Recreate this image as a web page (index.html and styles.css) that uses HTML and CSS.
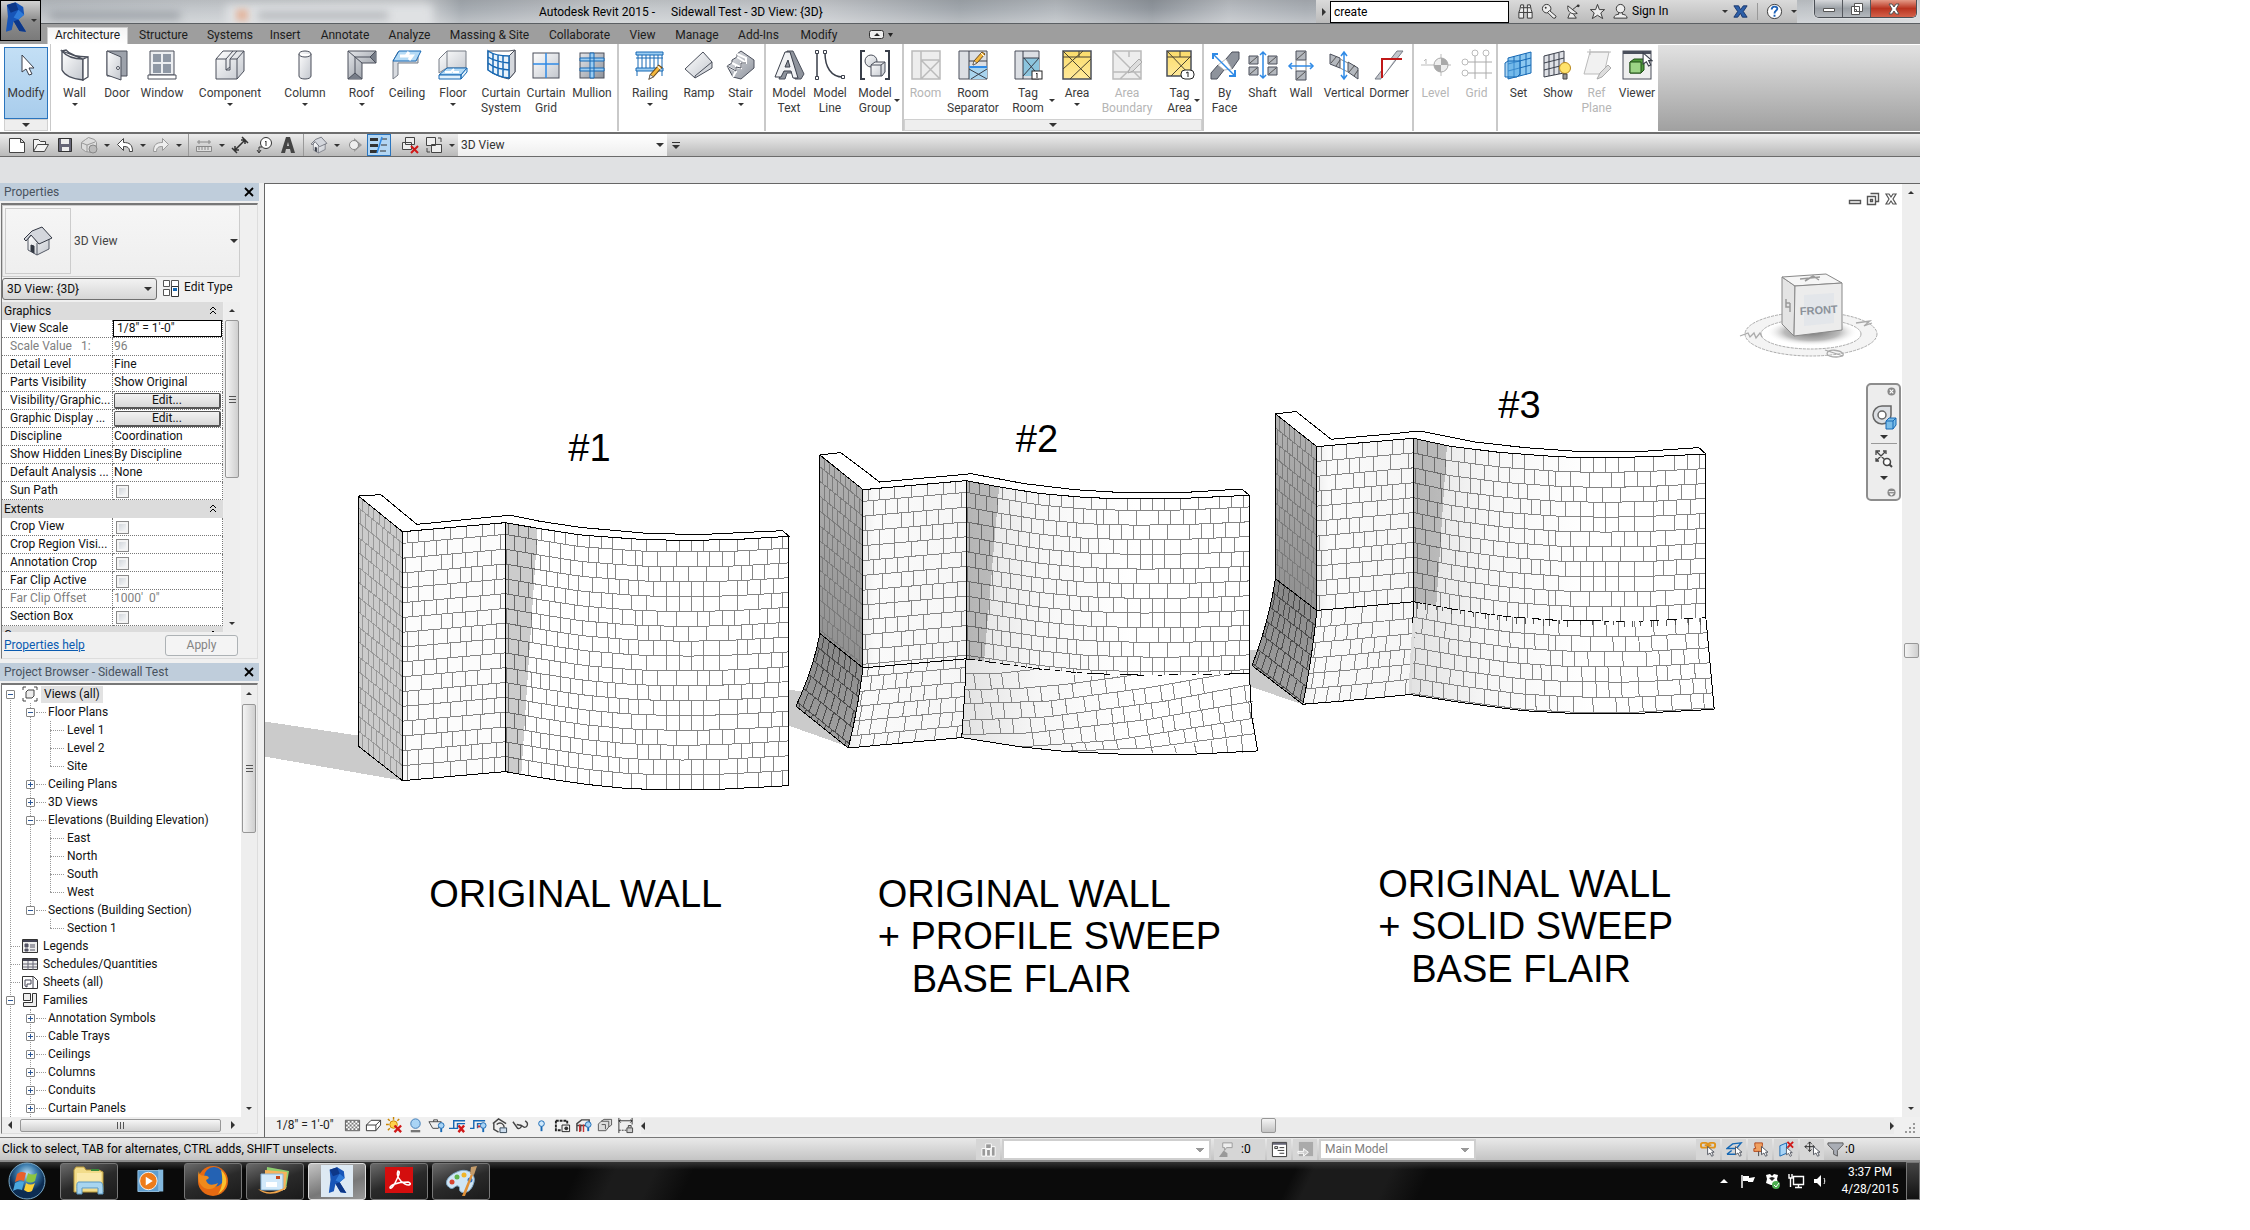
FILE: index.html
```html
<!DOCTYPE html>
<html lang="en">
<head>
<meta charset="utf-8">
<title>Autodesk Revit 2015 - Sidewall Test - 3D View: {3D}</title>
<link rel="stylesheet" href="styles.css">
</head>
<body>
<svg class="defs" aria-hidden="true">
  <defs>
    <linearGradient id="g" x1="0" y1="0" x2="1" y2="1"><stop offset="0" stop-color="#fff"/><stop offset="1" stop-color="#c3c7ce"/></linearGradient>
    <linearGradient id="gd" x1="0" y1="0" x2="1" y2="1"><stop offset="0" stop-color="#e4e6ea"/><stop offset="1" stop-color="#8d929b"/></linearGradient>
    <linearGradient id="gy" x1="0" y1="0" x2="0" y2="1"><stop offset="0" stop-color="#fbdc6a"/><stop offset="1" stop-color="#ffe99a"/></linearGradient>
    <linearGradient id="side" x1="0" y1="0" x2="0" y2="1"><stop offset="0" stop-color="#b2b2b2"/><stop offset="1" stop-color="#8e8e8e"/></linearGradient>
    <linearGradient id="skirt" x1="0" y1="0" x2="0" y2="1"><stop offset="0" stop-color="#868686"/><stop offset="1" stop-color="#a2a2a2"/></linearGradient>
    <linearGradient id="front" x1="0" y1="0" x2="1" y2="0"><stop offset="0" stop-color="#eeeeee"/><stop offset=".12" stop-color="#fafafa"/><stop offset="1" stop-color="#f6f6f6"/></linearGradient>
    <linearGradient id="bend" x1="0" y1="0" x2="1" y2="0"><stop offset="0" stop-color="#e2e2e2"/><stop offset=".25" stop-color="#f6f6f6"/><stop offset=".6" stop-color="#fff"/><stop offset="1" stop-color="#fff"/></linearGradient>
    <radialGradient id="halo"><stop offset="0" stop-color="#777"/><stop offset=".6" stop-color="#bbb"/><stop offset="1" stop-color="#fff" stop-opacity="0"/></radialGradient>
    <radialGradient id="orb" cx=".5" cy=".3"><stop offset="0" stop-color="#b9dff2"/><stop offset=".5" stop-color="#3f7fb0"/><stop offset="1" stop-color="#0c2c52"/></radialGradient>
    <symbol id="pencil" viewBox="0 0 16 16"><path d="M2 15l1-4 8-9 3 2-8 9z" fill="#f5b83d" stroke="#6b4a1c"/><path d="M10 3l3 3" stroke="#fff"/><path d="M2 15l1-4 3 2z" fill="#fff" stroke="#555" stroke-width=".7"/></symbol>
    <symbol id="cursor" viewBox="0 0 10 14"><path d="M1 1v10l3-2 2 4 2-1-2-4h3z" fill="#fff" stroke="#3a3f4a"/></symbol>
    <symbol id="rlogo" viewBox="0 0 24 32"><path d="M2 3l9-3 8 5 1 8-6 5 8 13-7-1-6-10-2 9-6 2 2-16z" fill="#1755b8"/><path d="M2 3l9-3 3 8-8 3zM9 20l5-2 8 13-7-1z" fill="#0d3788"/><path d="M14 8l6 5-6 5-5-2z" fill="#2f7bd9"/></symbol>
    <symbol id="house" viewBox="0 0 32 32"><path d="M6 14v11l9 5 12-6V13L15 17l-5-8z" fill="url(#g)" stroke="#555a66"/><path d="M15 18v12" stroke="#555a66"/><path d="M2 14L10 6l10-4 10 11-13 6-8-9-5 6z" fill="#d4d7dd" stroke="#333843"/><path d="M9 20l3 1v7l-3-2z" fill="#333843" stroke="#333843"/></symbol>
  </defs>
</svg>

<div class="app">
  <header class="titlebar">
    <span class="ghost ghost-a"></span><span class="ghost ghost-tab"></span><span class="ghost ghost-b"></span><span class="ghost ghost-dot"></span>
    <h1 class="title"><span>Autodesk Revit 2015 -</span><span>Sidewall Test - 3D View: {3D}</span></h1>
    <div class="infocenter">
      <span class="caret right"></span>
      <input class="search" aria-label="Search" value="create">
      <button class="ib" aria-label="Find"><svg viewBox="0 0 18 18"><path d="M3 7l1-5h3v3h4V2h3l1 5 1 3v6h-5v-6H7v6H2v-6z" fill="#eee" stroke="#333"/><path d="M2 10h5M11 10h5M7 5v5M11 5v5M4 5h3M11 5h3" stroke="#333"/></svg></button>
      <button class="ib" aria-label="Subscription"><svg viewBox="0 0 18 18"><circle cx="6" cy="6" r="4.500" fill="#eee" stroke="#333"/><circle cx="5" cy="5" r="1" fill="#333"/><path d="M9 8l7 6-1 2h-2l-6-6z" fill="#eee" stroke="#333"/></svg></button>
      <button class="ib" aria-label="Communication"><svg viewBox="0 0 18 18"><path d="M3 3c-1 6 4 10 10 8zM8 7l5-4M5 11l-2 5h9l-3-4" fill="#eee" stroke="#333"/><circle cx="14" cy="3" r="1.500" fill="#333"/></svg></button>
      <button class="ib" aria-label="Favorites"><svg viewBox="0 0 18 18"><path d="M9 1.500l2 5.500h5.500l-4 3.500 2 6L9 13l-5.500 3.500 2-6-4-3.500H7z" fill="#eee" stroke="#333"/></svg></button>
      <button class="sign"><svg viewBox="0 0 18 18"><path d="M2 16c0-3 3-4 5-4v-2h4v2c2 0 5 1 5 4z" fill="#eee" stroke="#333"/><circle cx="9" cy="6" r="4.500" fill="#eee" stroke="#333"/></svg>Sign In<span class="caret"></span></button>
      <button class="ib" aria-label="Exchange"><svg viewBox="0 0 18 18"><path d="M2 3h5l2 4 3-4h4l-4 6 4 6h-5l-2-4-3 4H2l4-6z" fill="#2c5fa8" stroke="#18356b"/></svg></button>
      <button class="ib help" aria-label="Help"><svg viewBox="0 0 18 18"><circle cx="9" cy="9" r="7.500" fill="#fff" stroke="#333"/><path d="M6 7c0-4 6-4 6-1 0 2-3 2-3 5M9 12.500v2" fill="none" stroke="#1e62b8" stroke-width="2"/></svg></button>
      <span class="caret"></span>
    </div>
    <div class="winctl">
      <button aria-label="Minimize"><svg viewBox="0 0 14 12"><path d="M1.500 5.500h11v3h-11z" fill="#fff" stroke="#555"/></svg></button>
      <button aria-label="Restore"><svg viewBox="0 0 14 12"><path d="M4.500.5h8v8h-8zM1.500 3.500h8v8h-8z" fill="#fff" stroke="#555"/><path d="M4.500 6.500h2v2h-2z" fill="#fff" stroke="#555"/></svg></button>
      <button class="x" aria-label="Close"><svg viewBox="0 0 14 12"><path d="M2 1h3l2 3 2-3h3L9 6l3 5H9L7 8l-2 3H2l3-5z" fill="#fff" stroke="#555"/></svg></button>
    </div>
  </header>
  <button class="appmenu" aria-label="Application menu"><svg viewBox="0 0 24 32"><use href="#rlogo"/></svg><span class="caret"></span></button>

  <nav class="tabs">
    <button class="on">Architecture</button><button>Structure</button><button>Systems</button><button>Insert</button><button>Annotate</button><button>Analyze</button><button>Massing &amp; Site</button><button>Collaborate</button><button>View</button><button>Manage</button><button>Add-Ins</button><button>Modify</button>
    <button class="mini" aria-label="Minimize ribbon"><svg viewBox="0 0 24 10"><rect x=".5" y=".5" width="14" height="8" rx="2" fill="#eee" stroke="#333"/><path d="M5 6l3-3 3 3zM19 3h5l-2.500 4z" fill="#222"/></svg></button>
  </nav>

  <div class="ribbon">
    <section class="panel p-modify">
      <button class="rb sel"><svg viewBox="0 0 32 32"><path d="M12 6v17l4-3 3 6 3-1-3-6h5z" fill="#fff" stroke="#3a3f4a"/></svg>Modify</button>
      <button class="more" aria-label="Select options"><span class="caret big"></span></button>
    </section>
    <section class="panel p-build">
      <button class="rb"><svg viewBox="0 0 32 32"><path d="M3 2c5 6 13 8 21 8v21C14 30 6 27 3 21z" fill="url(#g)" stroke="#4a4f5b" stroke-width="1.300"/><path d="M3 2l4-1c4 5 13 7 22 7l-5 2zM24 10l5-2v20l-5 3z" fill="#fff" stroke="#4a4f5b" stroke-width="1.300"/></svg>Wall<span class="caret"></span></button>
      <button class="rb"><svg viewBox="0 0 32 32"><path d="M6 2h20v25H6z" fill="#9da2ab" stroke="#4a4f5b"/><path d="M6 2l14 6v23L6 26z" fill="url(#g)" stroke="#4a4f5b"/><circle cx="17" cy="19" r="1.500" fill="#fff" stroke="#4a4f5b"/></svg>Door</button>
      <button class="rb"><svg viewBox="0 0 32 32"><path d="M4 2h24v24H4z" fill="#eceef1" stroke="#4a4f5b"/><path d="M7 5h18v19H7z" fill="#8f98a5"/><path d="M16 5v19M7 14h18" stroke="#eceef1" stroke-width="2"/><path d="M2 26h28v4H2z" fill="#fff" stroke="#4a4f5b"/></svg>Window</button>
      <button class="rb"><svg viewBox="0 0 32 32"><path d="M2 10l7-8h21v20l-7 8H2z" fill="url(#g)" stroke="#4a4f5b"/><path d="M2 10h10v11h4V10h7v20M12 10l7-8M16 10l7-8M23 10l7-8M12 21l4-3" fill="none" stroke="#4a4f5b"/></svg>Component<span class="caret"></span></button>
      <button class="rb"><svg viewBox="0 0 32 32"><path d="M10 5c0-4 12-4 12 0v22c0 4-12 4-12 0z" fill="url(#g)" stroke="#4a4f5b"/><path d="M10 5c0 4 12 4 12 0" fill="#fff" stroke="#4a4f5b"/></svg>Column<span class="caret"></span></button>
      <button class="rb"><svg viewBox="0 0 32 32"><path d="M2 2h28v12H16v16H2z" fill="url(#gd)" stroke="#4a4f5b"/><path d="M30 2v12l-6-6zM2 30h14l-7-6z" fill="#777d88"/><path d="M2 2l7 6h15M9 8v16M9 8l7 6M30 2l-6 6 6 6M2 30l7-6 7 6" fill="none" stroke="#4a4f5b"/></svg>Roof<span class="caret"></span></button>
      <button class="rb"><svg viewBox="0 0 32 32"><path d="M2 12v18l5-4V14h20V3H7z" fill="#d8dbe0" stroke="#777c86"/><path d="M2 12l6-10h22l-5 10z" fill="#b4daf5" stroke="#1668b4"/><path d="M9 7h6l3-4M15 7h6l-3 4" fill="none" stroke="#fff" stroke-width="3"/></svg>Ceiling</button>
      <button class="rb"><svg viewBox="0 0 32 32"><path d="M2 24V10l8-8h19v18H8z" fill="url(#g)" stroke="#777c86"/><path d="M10 2v17h19" fill="none" stroke="#777c86"/><path d="M2 26l8-7h20l-6 7z" fill="#b4daf5" stroke="#1668b4"/><path d="M2 26h22v4H2zM24 26l6-7v4l-6 7z" fill="#e2f1fb" stroke="#1668b4"/><path d="M8 23h6l3-3M16 23h6" fill="none" stroke="#fff" stroke-width="2"/></svg>Floor<span class="caret"></span></button>
      <button class="rb two"><svg viewBox="0 0 32 32"><path d="M3 2h21l6-1v22l-6 7C14 28 7 24 3 21z" fill="#fff" stroke="#4a4f5b"/><path d="M24 7l6-6v22l-6 7z" fill="#d5d8dd" stroke="#4a4f5b"/><path d="M3 2c6 4 12 5 21 5v22C14 28 7 24 3 21zM3 8c6 4 12 5 21 6M3 14c6 5 12 6 21 7M8 5v20M13 6v21M18 7v21" fill="#e9f3fb" stroke="#1668b4" stroke-width="1.500"/></svg>Curtain<br>System</button>
      <button class="rb two"><svg viewBox="0 0 32 32"><rect x="3" y="4" width="26" height="25" fill="url(#g)" stroke="#4a4f5b"/><path d="M16 4v25M3 15h26" stroke="#2f8ae6" stroke-width="1.500"/></svg>Curtain<br>Grid</button>
      <button class="rb"><svg viewBox="0 0 32 32"><rect x="4" y="4" width="24" height="25" fill="url(#gd)" stroke="#4a4f5b"/><path d="M4 9h24v3H4zM4 19h24v3H4zM14 4h4v25h-4z" fill="#9ccdf2" stroke="#1668b4"/></svg>Mullion</button>
    </section>
    <section class="panel p-circ">
      <button class="rb"><svg viewBox="0 0 32 32"><path d="M2 3h27v3H2zM2 19h27v3H2z" fill="#9ccdf2" stroke="#1668b4"/><path d="M4 6v13M8 6v13M12 6v13M16 6v13M20 6v13M24 6v13M28 6v13" stroke="#1668b4"/><path d="M2 9h27M3 22v5M28 22v5" stroke="#1668b4"/><use href="#pencil" x="13" y="14" width="17" height="17"/></svg>Railing<span class="caret"></span></button>
      <button class="rb"><svg viewBox="0 0 32 32"><path d="M2 20L20 3l9 10v6L12 29z" fill="url(#g)" stroke="#4a4f5b"/><path d="M12 29v-2l17-14" fill="none" stroke="#4a4f5b"/></svg>Ramp</button>
      <button class="rb"><svg viewBox="0 0 32 32"><path d="M2 17l5-3v-3l5-3V5l4-3 13 9v8l-13 11-8-2z" fill="url(#gd)" stroke="#4a4f5b"/><path d="M2 17l9 5v-4l5 1v-5l5 0V9L12 5M7 14l8 4M12 8l8 5M8 28l3-6" fill="none" stroke="#fff" stroke-width="2"/><path d="M2 17l9 5v-4l5 1v-5l5 0" fill="none" stroke="#4a4f5b"/></svg>Stair<span class="caret"></span></button>
    </section>
    <section class="panel p-model">
      <button class="rb two"><svg viewBox="0 0 32 32"><path d="M6 30h6l2-6h6l2 6h6l3-5L20 2h-6z" fill="#8f949d" stroke="#4a4f5b"/><path d="M2 28L12 3h5l8 26h-5l-2-7h-7l-3 6zM12 18h5l-2-7z" fill="#f1f2f4" stroke="#3a3f4a"/></svg>Model<br>Text</button>
      <button class="rb two"><svg viewBox="0 0 32 32"><path d="M3 4v24M11 4c0 14 6 24 18 24" fill="none" stroke="#3a3f4a" stroke-width="1.500"/><path d="M1.500 1.500h3v3h-3zM1.500 27.500h3v3h-3zM9.500 1.500h3v3h-3zM27.500 26.500h3v3h-3z" fill="#fff" stroke="#3a3f4a"/></svg>Model<br>Line</button>
      <button class="rb two"><svg viewBox="0 0 32 32"><path d="M6 2H2v28h4M26 2h4v28h-4" fill="none" stroke="#3a3f4a" stroke-width="2"/><circle cx="12" cy="12" r="6" fill="url(#g)" stroke="#4a4f5b"/><path d="M12 16l4-3h10v10l-3 4H12z" fill="url(#g)" stroke="#4a4f5b"/><path d="M12 16h10v11M22 16l4-3" fill="none" stroke="#4a4f5b"/></svg>Model<br>Group<span class="caret"></span></button>
    </section>
    <section class="panel p-room">
      <div class="row">
      <button class="rb" disabled><svg viewBox="0 0 32 32"><path d="M2 2h28v28H2zM11 2v28M11 11h19M11 11l19 19M30 11L11 30" fill="#ededed" stroke="#bbb" stroke-width="1.500"/></svg>Room</button>
      <button class="rb two"><svg viewBox="0 0 32 32"><path d="M2 2h28v28H2z" fill="#dcdfe4" stroke="#4a4f5b"/><path d="M12 18h18v12H12z" fill="#a9d4ee"/><path d="M12 2v28M12 20l18 10M30 20L14 30M12 12h18" fill="none" stroke="#3a3f4a"/><path d="M12 18h18" stroke="#2f8ae6" stroke-width="2"/><use href="#pencil" x="14" y="1" width="16" height="16"/></svg>Room<br>Separator</button>
      <button class="rb two"><svg viewBox="0 0 32 32"><path d="M3 2h24v28H3z" fill="#dcdfe4" stroke="#4a4f5b"/><path d="M11 9h16v18H11z" fill="#8cc5de"/><path d="M11 2v28M11 9h16L11 27M12 9l15 18" fill="none" stroke="#3a3f4a"/><rect x="20" y="22" width="10" height="8" fill="#fff" stroke="#222"/><path d="M24 25l1-1v5" fill="none" stroke="#222"/></svg>Tag<br>Room<span class="caret"></span></button>
      <button class="rb"><svg viewBox="0 0 32 32"><path d="M2 2h28v28H2z" fill="url(#gy)" stroke="#4a4f5b" stroke-width="1.500"/><path d="M2 2l28 28M30 10L9 30M2 8h28M18 2v6M2 20l20-18" fill="none" stroke="#4a4330"/></svg>Area<span class="caret"></span></button>
      <button class="rb two" disabled><svg viewBox="0 0 32 32"><path d="M2 2h28v28H2zM2 2l28 28M30 10L9 30M2 23h28M18 2v6" fill="#ededed" stroke="#bbb" stroke-width="1.500"/><path d="M17 24l2-5 9-9 3 3-9 9z" fill="#ddd" stroke="#aaa"/></svg>Area<br>Boundary</button>
      <button class="rb two"><svg viewBox="0 0 32 32"><path d="M3 2h24v25H3z" fill="url(#gy)" stroke="#4a4f5b" stroke-width="1.500"/><path d="M3 2l24 25M27 7L7 27M3 8h24M16 2v6" fill="none" stroke="#4a4330"/><rect x="17" y="21" width="13" height="9" rx="4" fill="#fff" stroke="#222"/><path d="M22 24l2-1v5" fill="none" stroke="#222"/></svg>Tag<br>Area<span class="caret"></span></button>
      </div>
      <button class="more" aria-label="Room and area options"><span class="caret big"></span></button>
    </section>
    <section class="panel p-open">
      <button class="rb two"><svg viewBox="0 0 32 32"><path d="M2 24l7-8 6 5-7 9H2zM17 10l6-7h7v7l-7 10z" fill="#8e939c" stroke="#4a4f5b"/><path d="M9 16l8-6 6 10-8 1z" fill="#fff" stroke="#bbb"/><path d="M5 6l20 20" stroke="#2f8ae6" stroke-width="1.500"/><path d="M4 10V5h5M26 21v6h-6" fill="none" stroke="#2f8ae6" stroke-width="2"/></svg>By<br>Face</button>
      <button class="rb"><svg viewBox="0 0 32 32"><path d="M2 7h9v8H2zM21 7h9v8h-9zM2 18h9v8H2zM21 18h9v8h-9z" fill="#b4b8be" stroke="#4a4f5b"/><path d="M3 14l7-6M22 14l7-6M3 25l7-6M22 25l7-6" stroke="#555"/><path d="M16 3v26M13 6l3-3 3 3M13 26l3 3 3-3" fill="none" stroke="#2f8ae6" stroke-width="1.500"/></svg>Shaft</button>
      <button class="rb"><svg viewBox="0 0 32 32"><path d="M11 2h10v9H11zM11 22h10v9H11z" fill="#b4b8be" stroke="#4a4f5b"/><path d="M12 10l8-7M12 30l8-7" stroke="#555"/><path d="M11 11v11M21 11v11" stroke="#888"/><path d="M4 17h24" stroke="#2f8ae6" stroke-width="1.500"/><path d="M7 14l-3 3 3 3M25 14l3 3-3 3" fill="none" stroke="#2f8ae6" stroke-width="1.500"/></svg>Wall</button>
      <button class="rb"><svg viewBox="0 0 32 32"><path d="M2 5l10 4v10L2 15zM20 13l10 6v11l-10-7z" fill="#b4b8be" stroke="#4a4f5b"/><path d="M3 14l6-7M8 17l4-6M21 23l6-7M26 27l4-6" stroke="#555"/><path d="M12 10l8 4M12 19l8 4" stroke="#888"/><path d="M16 4v25M13 7l3-4 3 4M13 26l3 4 3-4" fill="none" stroke="#2f8ae6" stroke-width="1.500"/></svg>Vertical</button>
      <button class="rb"><svg viewBox="0 0 32 32"><path d="M2 30L24 2h6L8 30z" fill="#c2c5cb" stroke="#777c86"/><path d="M10 29V10h12L8 30z" fill="#fff"/><path d="M9 29V10h20" fill="none" stroke="#c01818" stroke-width="2"/></svg>Dormer</button>
    </section>
    <section class="panel p-datum">
      <button class="rb" disabled><svg viewBox="0 0 32 32"><path d="M1 16h30M21 5v22M4 12l2-2v5" fill="none" stroke="#bbb"/><circle cx="21" cy="16" r="7" fill="#eee" stroke="#aaa"/><path d="M21 9a7 7 0 0 1 7 7h-7zM21 23a7 7 0 0 1-7-7h7z" fill="#aaa"/></svg>Level</button>
      <button class="rb" disabled><svg viewBox="0 0 32 32"><path d="M14 7v23M25 7v23M7 13h24M7 24h24" stroke="#aaa"/><g fill="#fff" stroke="#bbb"><circle cx="14" cy="4" r="3"/><circle cx="25" cy="4" r="3"/><circle cx="4" cy="13" r="3"/><circle cx="4" cy="24" r="3"/></g></svg>Grid</button>
    </section>
    <section class="panel p-plane">
      <button class="rb"><svg viewBox="0 0 32 32"><path d="M5 9l23-6v21L5 30z" fill="#8cc8f0" stroke="#1668b4"/><path d="M11 7v21M17 6v21M23 4v22M5 15l23-6M5 22l23-6" stroke="#1668b4"/><path d="M2 14l3-2h12v13l-3 3H2z" fill="#5aaae4" fill-opacity=".5" stroke="#1668b4"/></svg>Set</button>
      <button class="rb"><svg viewBox="0 0 32 32"><path d="M2 7l20-5v22L2 28z" fill="#dfe1e6" stroke="#3a3f4a"/><path d="M7 6v21M12 5v21M17 4v21M2 14l20-5M2 21l20-5" stroke="#3a3f4a"/><circle cx="23" cy="19" r="5.500" fill="#ffe36b" stroke="#b8871b"/><path d="M21 25h4v5h-4z" fill="#999" stroke="#444"/></svg>Show</button>
      <button class="rb two" disabled><svg viewBox="0 0 32 32"><path d="M9 3h19l-5 22H3zM6 3h24M9 0v6" fill="#f1f1f1" stroke="#bbb"/><path d="M16 30l3-6 8-8 3 3-9 9z" fill="#ddd" stroke="#aaa"/></svg>Ref<br>Plane</button>
      <button class="rb"><svg viewBox="0 0 32 32"><rect x="2" y="2" width="28" height="28" fill="#eee" stroke="#4a4f5b"/><path d="M2 2h28v3H2z" fill="#4a4f5b"/><path d="M9 13l4-3h10v11l-3 3H9z" fill="#4f9a3c" stroke="#1e4f14"/><path d="M9 13h11v11H9z" fill="#9cd486" stroke="#1e4f14"/><use href="#cursor" x="21" y="2" width="11" height="17"/></svg>Viewer</button>
    </section>
    <div class="fill"></div>
  </div>

  <div class="qat">
    <button aria-label="New"><svg viewBox="0 0 18 18"><path d="M1.500 2.500h11l4 4v10h-15zM12.500 2.500v4h4" fill="#fff" stroke="#444"/></svg></button>
    <button aria-label="Open"><svg viewBox="0 0 18 18"><path d="M1.500 15.500v-12h5l2 2h5v3M1.500 15.500l4-7h11l-4 7z" fill="#f4f4f4" stroke="#444"/></svg></button>
    <button aria-label="Save"><svg viewBox="0 0 18 18"><path d="M2.500 2.500h13v13h-13z" fill="#667" stroke="#333"/><path d="M5 3h8v5H5zM6 11h7v4H6z" fill="#eee"/></svg></button>
    <button aria-label="Synchronize"><svg viewBox="0 0 18 18"><path d="M1.500 6.500l4-3 3-2 6 2 2 3v7l-5 3-6-1-4-3z" fill="#ddd" stroke="#999"/><path d="M2 7l5 2 8-3M7 9v7" fill="none" stroke="#999"/><circle cx="13" cy="13" r="4" fill="#bbb" stroke="#888"/></svg></button>
    <span class="caret"></span>
    <button aria-label="Undo"><svg viewBox="0 0 18 18"><path d="M1.500 8.500l6-6v4c6 0 9 2 9 9h-3c0-4-2-5-6-5v4z" fill="#fff" stroke="#444"/></svg></button>
    <span class="caret"></span>
    <button aria-label="Redo"><svg viewBox="0 0 18 18"><path d="M16.500 8.500l-6-6v4c-6 0-9 2-9 9h3c0-4 2-5 6-5v4z" fill="#eee" stroke="#999"/></svg></button>
    <span class="caret"></span><span class="sep"></span>
    <button aria-label="Measure"><svg viewBox="0 0 18 18"><path d="M2 6h14M4 4v4M14 4v4" stroke="#888"/><path d="M1.500 10.500h15v5h-15zM4 11v3M7 11v3M10 11v3M13 11v3" fill="#ddd" stroke="#888"/></svg></button>
    <span class="caret"></span>
    <button aria-label="Aligned dimension"><svg viewBox="0 0 18 18"><path d="M4 14L14 4M1 12l5 5M11 1l6 6M4 10v4h4M10 4h4v4" fill="none" stroke="#333" stroke-width="1.500"/></svg></button>
    <button aria-label="Tag by category"><svg viewBox="0 0 18 18"><circle cx="11" cy="7" r="5.500" fill="#fff" stroke="#333"/><path d="M10 6l1-1v5M7 11H4v5M2 14l2 3 2-3" fill="none" stroke="#333"/></svg></button>
    <button aria-label="Text"><svg viewBox="0 0 18 18"><path d="M2 17L7 1h4l5 16h-4l-1-4H7l-1 4zM8 10h2L9 6z" fill="#444"/></svg></button>
    <span class="sep"></span>
    <button aria-label="Default 3D view"><svg viewBox="0 0 32 32"><use href="#house"/></svg></button>
    <span class="caret"></span>
    <button aria-label="Section"><svg viewBox="0 0 18 18"><path d="M8 2l8 7-8 7z" fill="#999"/><circle cx="8" cy="9" r="4.500" fill="#eee" stroke="#888"/></svg></button>
    <button class="on" aria-label="Thin lines"><svg viewBox="0 0 18 18"><path d="M1 3h6v1H1zM1 9h6v1H1zM1 15h5v1H1z" fill="#333" stroke="#333" stroke-width="2"/><path d="M11 3h6M11 9h6M10 15h6" stroke="#333"/><path d="M7 17l5-16" stroke="#2f8ae6" stroke-width="1.500"/></svg></button>
    <span class="gap"></span>
    <button aria-label="Close hidden windows"><svg viewBox="0 0 18 18"><path d="M4.500 1.500h9v7h-9zM1.500 6.500h9v7h-9z" fill="#eee" stroke="#444"/><path d="M10 10l7 7M17 10l-7 7" stroke="#d01818" stroke-width="2"/></svg></button>
    <button aria-label="Switch windows"><svg viewBox="0 0 18 18"><path d="M1.500 1.500h9v8h-9zM6.500 8.500h10v8h-10z" fill="#eee" stroke="#444"/><path d="M13 2h3v4M2 12v4h3" fill="none" stroke="#444"/></svg></button>
    <span class="caret"></span>
    <button class="viewpick">3D View<span class="caret big"></span></button>
    <button class="cust" aria-label="Customize"><i></i><span class="caret big"></span></button>
  </div>
  <div class="options"></div>

  <main class="work">
    <aside class="dock">
      <h2 class="dtitle">Properties<button aria-label="Close properties"><svg viewBox="0 0 10 10"><path d="M1 1l8 8M9 1L1 9" stroke="#000" stroke-width="1.800"/></svg></button></h2>
      <div class="props">
        <button class="typesel"><span class="thumb"><svg viewBox="0 0 32 32"><use href="#house"/></svg></span>3D View<span class="caret big"></span></button>
        <div class="inst">
          <button class="combo">3D View: {3D}<span class="caret big"></span></button>
          <button class="edittype"><svg viewBox="0 0 18 18"><path d="M1.500 1.500h6v6h-6zM9.500 1.500h7v6h-7zM1.500 10.500h6v6h-6z" fill="#fff" stroke="#555"/><path d="M9.500 7.500h7v10h-7z" fill="#fff" stroke="#333"/><path d="M11 9h4v3h-4z" fill="#1668b4"/></svg>Edit Type</button>
        </div>
        <div class="gridwrap">
          <table class="pg">
            <colgroup><col class="c1"><col></colgroup>
            <tr class="gh"><th colspan="2">Graphics<svg viewBox="0 0 8 9"><path d="M1 4l3-3 3 3M1 8l3-3 3 3"/></svg></th></tr>
            <tr><th><label for="vs">View Scale</label></th><td class="flush"><input id="vs" class="scale" value="1/8&quot; = 1'-0&quot;"></td></tr>
            <tr class="dim"><th>Scale Value &nbsp; 1:</th><td>96</td></tr>
            <tr><th>Detail Level</th><td>Fine</td></tr>
            <tr><th>Parts Visibility</th><td>Show Original</td></tr>
            <tr><th>Visibility/Graphic...</th><td class="flush"><button class="ed">Edit...</button></td></tr>
            <tr><th>Graphic Display ...</th><td class="flush"><button class="ed">Edit...</button></td></tr>
            <tr><th>Discipline</th><td>Coordination</td></tr>
            <tr><th>Show Hidden Lines</th><td>By Discipline</td></tr>
            <tr><th>Default Analysis ...</th><td>None</td></tr>
            <tr><th><label for="k1">Sun Path</label></th><td><input type="checkbox" id="k1"></td></tr>
            <tr class="gh"><th colspan="2">Extents<svg viewBox="0 0 8 9"><path d="M1 4l3-3 3 3M1 8l3-3 3 3"/></svg></th></tr>
            <tr><th><label for="k2">Crop View</label></th><td><input type="checkbox" id="k2"></td></tr>
            <tr><th><label for="k3">Crop Region Visi...</label></th><td><input type="checkbox" id="k3"></td></tr>
            <tr><th><label for="k4">Annotation Crop</label></th><td><input type="checkbox" id="k4"></td></tr>
            <tr><th><label for="k5">Far Clip Active</label></th><td><input type="checkbox" id="k5"></td></tr>
            <tr class="dim"><th>Far Clip Offset</th><td>1000'&nbsp; 0"</td></tr>
            <tr><th><label for="k6">Section Box</label></th><td><input type="checkbox" id="k6"></td></tr>
            <tr class="gh"><th colspan="2">Camera<svg viewBox="0 0 8 9"><path d="M1 4l3-3 3 3M1 8l3-3 3 3"/></svg></th></tr>
          </table>
          <div class="vs"><span class="caret up"></span><div class="th th-props"><i></i></div><span class="caret"></span></div>
        </div>
        <div class="pfoot"><a href="#help">Properties help</a><button disabled>Apply</button></div>
      </div>
      <h2 class="dtitle second">Project Browser - Sidewall Test<button aria-label="Close project browser"><svg viewBox="0 0 10 10"><path d="M1 1l8 8M9 1L1 9" stroke="#000" stroke-width="1.800"/></svg></button></h2>
      <div class="browser">
        <div class="bmain">
          <ul class="tree">
            <li><div class="r0"><button class="tw" aria-label="Collapse"></button><svg viewBox="0 0 16 16"><path d="M1 4V1h3M12 1h3v3M15 12v3h-3M4 15H1v-3" fill="none" stroke="#444"/><path d="M4 6l2-2h6v6l-2 2H4z" fill="#eee" stroke="#444"/></svg><span class="hl">Views (all)</span></div>
              <ul class="t1">
                <li><div class="r1"><button class="tw" aria-label="Collapse"></button>Floor Plans</div><ul class="t2"><li>Level 1</li><li>Level 2</li><li>Site</li></ul></li>
                <li><div class="r1"><button class="tw plus" aria-label="Expand"></button>Ceiling Plans</div></li>
                <li><div class="r1"><button class="tw plus" aria-label="Expand"></button>3D Views</div></li>
                <li><div class="r1"><button class="tw" aria-label="Collapse"></button>Elevations (Building Elevation)</div><ul class="t2"><li>East</li><li>North</li><li>South</li><li>West</li></ul></li>
                <li><div class="r1"><button class="tw" aria-label="Collapse"></button>Sections (Building Section)</div><ul class="t2"><li>Section 1</li></ul></li>
              </ul></li>
            <li><div class="r0 leaf"><svg viewBox="0 0 16 16"><path d="M.5 1.500h15v13H.5z" fill="#eee" stroke="#333"/><path d="M1 2h14v2H1z" fill="#445"/><path d="M3 6h3v3H3zM3 11h3v2H3zM8 7h5M8 9h5M8 12h5" fill="#556" stroke="#556"/></svg>Legends</div></li>
            <li><div class="r0 leaf"><svg viewBox="0 0 16 16"><path d="M.5 2.500h15v11H.5z" fill="#eee" stroke="#333"/><path d="M1 3h14v2H1z" fill="#445"/><path d="M1 8h14M1 11h14M6 5v9M11 5v9" stroke="#667"/></svg>Schedules/Quantities</div></li>
            <li><div class="r0 leaf"><svg viewBox="0 0 16 16"><path d="M.5 2.500h11l4 4v8H.5z" fill="#fff" stroke="#333"/><path d="M3 12V6h6v4H5v3zM11 3v11" fill="none" stroke="#445"/></svg>Sheets (all)</div></li>
            <li><div class="r0"><button class="tw" aria-label="Collapse"></button><svg viewBox="0 0 16 16"><path d="M1.500 1.500h7v7h-7zM10.500 1.500h4v13h-13v-4h9z" fill="#eee" stroke="#333"/></svg>Families</div>
              <ul class="t1 open">
                <li><div class="r1"><button class="tw plus" aria-label="Expand"></button>Annotation Symbols</div></li>
                <li><div class="r1"><button class="tw plus" aria-label="Expand"></button>Cable Trays</div></li>
                <li><div class="r1"><button class="tw plus" aria-label="Expand"></button>Ceilings</div></li>
                <li><div class="r1"><button class="tw plus" aria-label="Expand"></button>Columns</div></li>
                <li><div class="r1"><button class="tw plus" aria-label="Expand"></button>Conduits</div></li>
                <li><div class="r1"><button class="tw plus" aria-label="Expand"></button>Curtain Panels</div></li>
              </ul></li>
          </ul>
          <div class="vs"><span class="caret up"></span><div class="th th-tree"><i></i></div><span class="caret"></span></div>
        </div>
        <div class="hs"><span class="caret left"></span><div class="th"><i></i></div><span class="caret right"></span></div>
      </div>
    </aside>

    <section class="view">
      <div class="vmain">
        <div class="canvas">
          <svg class="model" id="model" viewBox="265 185 1637 932" preserveAspectRatio="xMinYMin slice">
            <g id="walls"></g>
            <g class="note">
              <text x="568" y="462">#1</text><text x="1015" y="453">#2</text><text x="1497" y="419">#3</text>
              <text x="429" y="907">ORIGINAL WALL</text>
              <text x="877" y="907">ORIGINAL WALL</text><text x="877" y="949">+ PROFILE SWEEP</text><text x="911" y="992">BASE FLAIR</text>
              <text x="1377" y="897">ORIGINAL WALL</text><text x="1377" y="939">+ SOLID SWEEP</text><text x="1410" y="982">BASE FLAIR</text>
            </g>
          </svg>
          <div class="mdi">
            <button aria-label="Minimize view"><svg viewBox="0 0 14 14"><path d="M1.500 8.500h11v3h-11z" fill="#fff" stroke="#555" stroke-width="1.400"/></svg></button>
            <button aria-label="Restore view"><svg viewBox="0 0 14 14"><path d="M4.500 1.500h8v8h-3M1.500 4.500h8v8h-8zM4.500 7.500h2v2h-2z" fill="#fff" stroke="#555" stroke-width="1.400"/></svg></button>
            <button aria-label="Close view"><svg viewBox="0 0 14 14"><path d="M2 2h3l2 3 2-3h3L9 7l3 5H9L7 9l-2 3H2l3-5z" fill="#fff" stroke="#555" stroke-width="1.200"/></svg></button>
          </div>
          <svg class="cube" viewBox="1735 270 150 92">
            <g fill="#f4f4f4" stroke="#aaa" stroke-dasharray="3 1"><ellipse cx="1811" cy="334" rx="66" ry="22"/><ellipse cx="1811" cy="334" rx="50" ry="15" fill="#fff"/></g>
            <ellipse cx="1812" cy="332" rx="46" ry="14" fill="url(#halo)"/>
            <path d="M1782 277l13 9-1 50-12-12z" fill="#e4e4e4" stroke="#888"/><path d="M1782 277l44-3 16 9-47 3z" fill="#f6f6f6" stroke="#888"/><path d="M1795 286l47-3v47l-48 6z" fill="#ececec" stroke="#888"/><path d="M1804 295l30-2v30l-30 3z" fill="#e3e6ea"/>
            <path d="M1800 279l20-2M1805 281l8-5 6 4M1786 299v8h4M1786 303h4M1790 312v-9" fill="none" stroke="#999" stroke-width="1.500"/>
            <path d="M1740 336l8-3 2 4 4-4 2 5 4-5 2 4M1856 323l14-2-6 5 8-3M1825 350l18 6M1827 354c0-6 14-4 16 0s-14 4-16 0" fill="none" stroke="#aaa" stroke-width="1.300"/>
            <text x="1800" y="315" transform="rotate(-3 1800 315)">FRONT</text>
          </svg>
          <div class="navbar">
            <button class="nx" aria-label="Close navigation bar"><svg viewBox="0 0 10 10"><circle cx="5" cy="5" r="4.500" fill="#888"/><path d="M3 3l4 4M7 3L3 7" stroke="#fff" stroke-width="1.200"/></svg></button>
            <button aria-label="Steering wheel"><svg viewBox="0 0 26 26"><path d="M11 2h9v9a9 9 0 1 1-9-9z" fill="#dcdfe3" stroke="#666" stroke-width="1.500"/><circle cx="11" cy="11" r="4" fill="#fff" stroke="#666" stroke-width="1.500"/><path d="M15 17l3-3h7v7l-3 4h-7z" fill="#7bbde8" stroke="#1668b4"/><path d="M15 17h7v8M22 17l3-3" fill="none" stroke="#1668b4"/></svg></button>
            <span class="caret big"></span><hr>
            <button class="zm" aria-label="Zoom"><svg viewBox="0 0 18 18"><path d="M1 5V1h4M8 1h3v3M1 8v3h3M2 2l8 8M10 2l-9 9" fill="none" stroke="#444" stroke-width="1.300"/><circle cx="12" cy="12" r="3.500" fill="#fff" stroke="#444" stroke-width="1.500"/><path d="M14 14l3 3" stroke="#444" stroke-width="2"/></svg></button>
            <span class="caret big"></span>
            <button class="nm" aria-label="Navigation bar options"><svg viewBox="0 0 10 10"><circle cx="5" cy="5" r="4.500" fill="#888"/><path d="M2 4h6M3 6l2 2 2-2" fill="#fff" stroke="#fff"/></svg></button>
          </div>
        </div>
        <div class="vs wide"><span class="caret up"></span><div class="th th-view"></div><span class="caret"></span></div>
      </div>
      <div class="vcb">
        <button class="sc">1/8" = 1'-0"</button>
        <button aria-label="Detail level"><svg viewBox="0 0 18 18"><path d="M1.500 3.500h15v11h-15z" fill="#fff" stroke="#555"/><path d="M2 5h14M2 9h14M2 13h14M4 7h12M4 11h12" stroke="#777" stroke-width="2" stroke-dasharray="2 2"/></svg></button>
        <button aria-label="Visual style"><svg viewBox="0 0 18 18"><path d="M1.500 8.500l5-5h10v5l-5 6h-10zM1.500 8.500h10v6M11.500 8.500l5-5" fill="#fff" stroke="#333"/></svg></button>
        <button aria-label="Sun path"><svg viewBox="0 0 18 18"><circle cx="8" cy="8" r="4" fill="#ffd34d" stroke="#c98500"/><path d="M8 0v3M0 8h3M2 2l2 2M14 2l-2 2M2 14l2-2" stroke="#c98500" stroke-width="1.500"/><path d="M9 9l7 7M16 9l-7 7" stroke="#d01818" stroke-width="2.500"/></svg></button>
        <button aria-label="Shadows"><svg viewBox="0 0 18 18"><circle cx="9" cy="7" r="5" fill="#a9d4f5" stroke="#3a78b5"/><path d="M4 15h10" stroke="#777" stroke-width="2.500"/></svg></button>
        <button aria-label="Rendering"><svg viewBox="0 0 18 18"><path d="M1 5l4 7h6l3-7zM6 5V3h4v2" fill="#eee" stroke="#444"/><circle cx="14" cy="9" r="3" fill="#a9d4f5" stroke="#1668b4"/><path d="M14 12v4" stroke="#1668b4" stroke-width="2"/></svg></button>
        <button aria-label="Crop view"><svg viewBox="0 0 18 18"><path d="M0 12h5V4h12M5 12h4V7h8" fill="none" stroke="#1668b4" stroke-width="1.500"/><path d="M10 9l6 7M16 9l-6 7" stroke="#d01818" stroke-width="2.500"/></svg></button>
        <button aria-label="Show crop region"><svg viewBox="0 0 18 18"><path d="M0 12h4V4h12M8 12V7h5" fill="none" stroke="#1668b4" stroke-width="1.500"/><circle cx="14" cy="9" r="3" fill="#a9d4f5" stroke="#1668b4"/><path d="M14 12v4" stroke="#1668b4" stroke-width="2"/><path d="M8 10h3" stroke="#c33" stroke-width="2"/></svg></button>
        <button aria-label="Lock view"><svg viewBox="0 0 18 18"><path d="M2 7l6-5 8 5M3 7v6l5 3M6 8c4-4 8 0 8 3" fill="none" stroke="#444" stroke-width="1.500"/><path d="M9.500 11.500h7v5h-7z" fill="#cde" stroke="#345"/></svg></button>
        <button aria-label="Temporary hide"><svg viewBox="0 0 18 18"><path d="M1 5l5 7c3 1 4-2 4-3l3 2c3 0 4-3 3-5l-2-2M5 8l5 1" fill="none" stroke="#444" stroke-width="1.500"/></svg></button>
        <button aria-label="Reveal hidden"><svg viewBox="0 0 18 18"><circle cx="9" cy="7" r="3" fill="#cfe8fb" stroke="#1668b4"/><path d="M9 10v5" stroke="#1668b4" stroke-width="2"/></svg></button>
        <button aria-label="Temporary view properties"><svg viewBox="0 0 18 18"><path d="M2 4h12v3M2 4v10h6" fill="none" stroke="#222" stroke-width="2" stroke-dasharray="3 1"/><path d="M8.500 8.500h8v7h-8z" fill="#eee" stroke="#222"/><circle cx="13" cy="12" r="2" fill="#333"/></svg></button>
        <button aria-label="Analytical model"><svg viewBox="0 0 18 18"><path d="M2 15V7l5-4h8v4M6 15V8M2 9h10" fill="none" stroke="#444" stroke-width="1.500"/><path d="M5 8v8M9 8v8" stroke="#c33" stroke-width="1.500"/><circle cx="14" cy="8" r="3" fill="#a9d4f5" stroke="#1668b4"/><path d="M14 11v4" stroke="#1668b4" stroke-width="2"/></svg></button>
        <button aria-label="Displacement"><svg viewBox="0 0 18 18"><path d="M2.500 7.500l3-3h8v6l-3 4h-8zM5.500 4.500l3-2h8v6l-3 2M6 8h4v5" fill="#ddd" stroke="#555"/></svg></button>
        <button aria-label="Constraints"><svg viewBox="0 0 18 18"><path d="M2 1v16M2 4h14M16 1v7M4 3L2 4l2 2M14 3l2 1-2 2" fill="none" stroke="#333"/><path d="M2 14h8" stroke="#333" stroke-dasharray="2 1"/><path d="M10.500 11.500h6v5h-6zM12 11V9h3v2" fill="#ccc" stroke="#444"/></svg></button>
        <div class="hs2"><span class="caret left"></span><div class="th"></div><span class="caret right"></span></div>
        <svg class="grip" viewBox="0 0 12 12"><path d="M9 2h2M9 6h2M5 6h2M9 10h2M5 10h2M1 10h2" stroke="#999" stroke-width="2"/></svg>
      </div>
    </section>
  </main>

  <footer class="status">
    <p>Click to select, TAB for alternates, CTRL adds, SHIFT unselects.</p>
    <button class="sb" aria-label="Worksets"><svg viewBox="0 0 18 18"><path d="M2 8h4v8H2zM6 3h6v5H6zM7 9h4v7H7zM12 6h4v10h-4z" fill="#999" stroke="#fff"/></svg></button>
    <select class="sel1" aria-label="Active workset" disabled><option></option></select>
    <button class="sb count"><svg viewBox="0 0 18 18"><path d="M5 2h10v5h-6l-2 3V7H5z" fill="#eee" stroke="#999"/><path d="M1 17l5-7 4 3v4z" fill="#999"/></svg><span>:0</span></button>
    <button class="sb" aria-label="Editing requests"><svg viewBox="0 0 18 18"><path d="M1.500 1.500h15v15h-15z" fill="#fff" stroke="#333"/><path d="M2 2h14v2H2z" fill="#667"/><path d="M4 6h3v2H4zM9 7h5M7 10h7M9 13h5" fill="none" stroke="#333"/></svg></button>
    <button class="sb" aria-label="Design options"><svg viewBox="0 0 18 18"><path d="M2 1h15v15H2z" fill="#aaa"/><path d="M1 11h6V8l5 4-5 4v-3H1z" fill="#ccc" stroke="#fff"/></svg></button>
    <select class="sel2" aria-label="Design option" disabled><option>Main Model</option></select>
    <div class="toggles">
      <button class="sb" aria-label="Select links"><svg viewBox="0 0 18 18"><rect x="1" y="2" width="7" height="5" rx="2" fill="none" stroke="#e0921a" stroke-width="2"/><rect x="9" y="2" width="7" height="5" rx="2" fill="none" stroke="#e0921a" stroke-width="2"/><path d="M5 4.500h7" stroke="#e0921a" stroke-width="2"/><use href="#cursor" x="7" y="5" width="9" height="12"/></svg></button>
      <button class="sb" aria-label="Select underlay"><svg viewBox="0 0 18 18"><path d="M1 8l6-5 9-1-5 6zM1 14l5-4M1 14h9" fill="none" stroke="#1668b4" stroke-width="1.500"/><use href="#cursor" x="9" y="5" width="9" height="12"/></svg></button>
      <button class="sb" aria-label="Select pinned"><svg viewBox="0 0 18 18"><path d="M3 2h8v3l-1 3h2v3H2V8h2L3 5z" fill="#f0a060" stroke="#b3471a"/><path d="M7 11v5" stroke="#444"/><use href="#cursor" x="9" y="5" width="9" height="12"/></svg></button>
      <button class="sb" aria-label="Select by face"><svg viewBox="0 0 18 18"><path d="M2 5l7-3v11l-7 3z" fill="#a9d4f5" stroke="#1668b4"/><path d="M10 1l6 6M16 1l-6 6" stroke="#d01818" stroke-width="2"/><use href="#cursor" x="8" y="6" width="8" height="11"/></svg></button>
      <button class="sb" aria-label="Drag on selection"><svg viewBox="0 0 18 18"><path d="M6 1v10M1 6h10M4 3l2-2 2 2M4 9l2 2 2-2M3 4L1 6l2 2M9 4l2 2" fill="none" stroke="#222"/><use href="#cursor" x="9" y="5" width="9" height="12"/></svg></button>
      <button class="filter"><svg viewBox="0 0 18 18"><path d="M1 2h16v2l-6 6v6l-4-2v-4L1 4z" fill="#a9adb5" stroke="#555"/></svg><span>:0</span></button>
    </div>
  </footer>

  <footer class="taskbar">
    <button class="start" aria-label="Start"><svg viewBox="0 0 38 38"><circle cx="19" cy="19" r="18" fill="url(#orb)" stroke="#79a9c7"/><path d="M9 12c4-3 6-2 9-1l-2 8c-3-1-5-1-9 1z" fill="#e8602c"/><path d="M20 11c3 2 6 2 9 0l-2 8c-3 2-6 2-9 0z" fill="#8cc63f"/><path d="M7 21c4-2 6-2 9-1l-2 8c-3-1-6-1-9 1z" fill="#4aa8e0"/><path d="M18 21c3 2 6 2 9 0l-3 8c-3 2-5 1-8-1z" fill="#fbd036"/></svg></button>
    <button class="tb" aria-label="Explorer"><svg viewBox="0 0 36 32"><path d="M3 5l2-3h8l2 3h13l4 2v20H3z" fill="#f2dc8a" stroke="#b99a3c"/><path d="M6 8h24v16H6z" fill="#fae9ab"/><path d="M20 5h8" stroke="#3a8a3a" stroke-width="2"/><path d="M8 17h20c4 0 4 2 4 12h-5v-6H11v6H6c0-8-1-12 2-12z" fill="#a8d5f0" stroke="#5a96bf"/></svg></button>
    <button class="tb plain" aria-label="Media Player"><svg viewBox="0 0 36 32"><path d="M26 3h6v25h-6z" fill="#82b8de"/><path d="M3 4h24v24H3z" fill="#5f9ecf" stroke="#9cc7e6"/><circle cx="15" cy="16" r="10" fill="#ee7c1b" stroke="#fff"/><path d="M12 11v10l8-5z" fill="#fff"/></svg></button>
    <button class="tb" aria-label="Firefox"><svg viewBox="0 0 36 32"><circle cx="18" cy="16" r="15" fill="#e66a12"/><circle cx="19" cy="12" r="10" fill="#2462b3"/><path d="M4 6c0 6 5 4 8 5s2 3-1 4c1 5 6 6 12 3-2 6-10 8-15 4S2 11 4 6z" fill="#f08a1c"/><path d="M26 5c8 7 7 18-3 24 5-7 5-16 3-24z" fill="#fbc02d"/></svg></button>
    <button class="tb" aria-label="Mail"><svg viewBox="0 0 36 32"><path d="M10 2l22 4-3 18-20-4z" fill="#8fce70"/><path d="M8 5l22 2-2 18H8z" fill="#f7b35c"/><path d="M4 9h22v16H4z" fill="#d2e9fa" stroke="#8db8d8"/><path d="M9 17h11v5H9z" fill="#fff"/><path d="M19 11h4v3h-4z" fill="#c4481d"/><path d="M1 24c10 5 18 4 29-3-4 8-22 11-29 3z" fill="#f2a54a"/></svg></button>
    <button class="tb active" aria-label="Revit"><svg viewBox="0 0 36 32"><path d="M2 0h32v32H2z" fill="#dde9f3"/><use href="#rlogo" x="9" y="2" width="20" height="27"/></svg></button>
    <button class="tb" aria-label="Adobe Reader"><svg viewBox="0 0 36 32"><path d="M4 2h28v26H4z" fill="#d40e0e"/><path d="M17 6c3 0 0 6-2 10-2 5-5 8-6 7-1-2 6-6 18-6 5 2 1 4-3 2-6-3-9-9-7-13z" fill="none" stroke="#fff" stroke-width="1.500"/></svg></button>
    <button class="tb" aria-label="Paint"><svg viewBox="0 0 36 32"><path d="M14 7c10-5 19 2 17 10s-7 12-13 10c-3-2 0-5-3-6s-4 4-8 2C-1 18 6 10 14 7z" fill="#cfe5f5" stroke="#7fa9c9"/><circle cx="9" cy="17" r="2.500" fill="#d8432f"/><circle cx="14" cy="12" r="2.500" fill="#5db34a"/><circle cx="21" cy="10" r="2.500" fill="#f0b428"/><circle cx="27" cy="15" r="2.500" fill="#2b6fc4"/><path d="M19 31l9-22 2 1-8 21z" fill="#e09038"/><path d="M27 9l1-7 6-1-3 9z" fill="#c59c6a"/></svg></button>
    <div class="tray">
      <svg viewBox="0 0 18 18"><path d="M5 11l4-4 4 4z" fill="#fff"/></svg>
      <svg viewBox="0 0 18 18"><path d="M3 3v13" stroke="#fff" stroke-width="1.500"/><path d="M4 4h6v2l6-1-2 5H9V9H4z" fill="#fff"/></svg>
      <svg viewBox="0 0 18 18"><path d="M3 3l4-1 2 2 2-2 4 1-1 4 1 4-5 2-2 0-5-2 1-4z" fill="#fff"/><path d="M6 6l3-1 3 1-3 3z" fill="#222"/><circle cx="13" cy="13" r="4" fill="#4caf50"/><path d="M11 13l2 2 3-4" fill="none" stroke="#fff"/></svg>
      <svg viewBox="0 0 18 18"><path d="M6.500 4.500h10v8h-10zM8 15.500h7M11.500 13v2M2 2v4h3V2M3.500 6v9" fill="none" stroke="#fff" stroke-width="1.400"/></svg>
      <svg viewBox="0 0 18 18"><path d="M3 7h3l4-4v12l-4-4H3z" fill="#fff"/><path d="M13 6c1 2 1 4 0 6" fill="none" stroke="#fff"/></svg>
    </div>
    <time>3:37 PM<br>4/28/2015</time>
    <button class="peek" aria-label="Show desktop"></button>
  </footer>
</div>
<script src="walls.js"></script>
</body>
</html>
```
FILE: walls.js
```js
// Draws the three masonry walls. Every face is a strip between a top and a
// bottom polyline; courses and joints are interpolated inside that strip.
const SVG = 'http://www.w3.org/2000/svg';
const host = document.getElementById('walls');

function add(d, cls, fill) {
  const p = document.createElementNS(SVG, 'path');
  p.setAttribute('d', d);
  p.setAttribute('class', cls);
  if (fill) p.setAttribute('fill', fill);
  host.appendChild(p);
}

const at = (line, u) => {
  const x0 = line[0][0], x1 = line[line.length - 1][0], x = x0 + (x1 - x0) * u;
  for (let i = 1; i < line.length; i++) {
    const a = line[i - 1], b = line[i];
    if (x <= b[0] + 0.01) {
      const t = (x - a[0]) / (b[0] - a[0]);
      return [x, a[1] + (b[1] - a[1]) * t];
    }
  }
  return line[line.length - 1];
};

const poly = (pts, close) => 'M' + pts.map(p => p.map(n => n.toFixed(1)).join(' ')).join('L') + (close ? 'Z' : '');

// Joint positions per course, as measured along a face.
const flat = [
  [16, 49, 93, 145, 192, 241, 276], [30, 66, 103, 135, 180, 234, 293],
  [8, 58, 116, 151, 189, 225, 268], [14, 48, 93, 135, 173, 207, 240, 282]
].map(r => r.map(x => x / 308));
const curve = [
  [10, 40, 71, 110, 148, 181, 217, 251, 287, 322, 377, 422, 484, 523, 559, 595, 643, 697, 760, 797, 832],
  [27, 62, 93, 131, 165, 207, 248, 280, 322, 352, 391, 412, 457, 512, 577, 613, 652, 688, 733, 787, 823],
  [5, 36, 78, 105, 133, 166, 195, 232, 272, 305, 331, 395, 430, 465, 503, 550, 603, 670, 707, 742, 778, 820],
  [10, 45, 82, 122, 157, 190, 220, 262, 310, 343, 368, 398, 443, 484, 523, 559, 595, 643, 697, 727, 765, 805]
].map(r => r.map(x => x / 850));
const narrow = [
  [0.1, 0.22, 0.34, 0.47, 0.6, 0.72, 0.86], [0.05, 0.17, 0.29, 0.4, 0.54, 0.66, 0.8, 0.93]
];

function rows(first, pitch, total) {
  const out = [0];
  for (let y = first; y < total - 2; y += pitch) out.push(y / total);
  out.push(1);
  return out;
}

function face(o) {
  const { s, top, bottom, courses, joints, cls, fill } = o;
  const t = top.map(s), b = bottom.map(s);
  const bow = o.bow || 0;
  const P = (u, v) => {
    const a = at(t, u), c = at(b, u);
    return [a[0] + (c[0] - a[0]) * v + bow * v * (1 - v), a[1] + (c[1] - a[1]) * v];
  };
  const edge = v => Array.from({ length: 25 }, (_, i) => P(i / 24, v));
  const side = u => Array.from({ length: 9 }, (_, i) => P(u, i / 8));
  add(poly([...edge(0), ...side(1), ...edge(1).reverse(), ...side(0).reverse()], true), 'face', fill);
  let d = '';
  for (let i = 1; i < courses.length; i++) {
    if (i < courses.length - 1) d += poly(edge(courses[i]));
    for (const u of joints[(i - 1) % joints.length]) d += poly([P(u, courses[i - 1]), P(u, courses[i])]);
  }
  add(d, cls);
  add(poly(side(0)) + poly(side(1)) + poly(edge(1)), 'edge');
  if (o.topEdge !== false) add(poly(edge(0)), 'edge');
}

const scale = (ox, oy) => ([x, y]) => [ox + x / 3, oy + y / 3];
const s1 = scale(340, 400), s2 = scale(780, 430), s3 = scale(1240, 390);
const shape = (s, pts, cls, fill) => add(poly(pts.map(s), true), cls, fill);
const page = p => p;

// Ground shadows
shape(page, [[265, 722], [358, 736], [402, 781], [265, 757]], 'shade');
shape(page, [[788, 690], [802, 692], [850, 748], [788, 726]], 'shade');
shape(page, [[1248, 650], [1264, 652], [1302, 705], [1249, 687]], 'shade');

// The cap runs along the back edge and returns along the front top edge.
const cap = (s, back, left, front) => shape(s, [...back, ...[...front].reverse(), left], 'cap');

// Wall 1
const c1t = [[495, 370], [600, 388], [720, 407], [915, 421], [1050, 423], [1195, 420], [1345, 411]];
const c1b = [[495, 1116], [600, 1134], [745, 1155], [865, 1167], [1000, 1171], [1120, 1170], [1345, 1158]];
cap(s1, [[55, 290], [122, 286], [230, 375], [495, 349], [515, 349], [600, 366], [720, 384], [930, 403], [1090, 405], [1327, 394]], [187, 397], c1t);
face({ s: s1, top: [[55, 290], [187, 397]], bottom: [[55, 1040], [187, 1143]], courses: rows(35, 44.4, 746), joints: narrow, cls: 'j2', fill: '#cbcbcb' });
face({ s: s1, top: [[187, 397], [495, 370]], bottom: [[187, 1143], [495, 1116]], courses: rows(35, 44.4, 746), joints: flat, cls: 'j1', fill: '#fcfcfc' });
face({ s: s1, top: c1t, bottom: c1b, courses: rows(35, 44.4, 746), joints: curve, cls: 'j1', fill: '#fff' });
shape(s1, [[496, 370], [592, 387], [543, 1124], [496, 1116]], 'cast');

// Wall 2
const c2t = [[556, 154], [650, 172], [780, 193], [920, 205], [1060, 209], [1210, 207], [1405, 198]];
const c2b = [[556, 688], [620, 697], [780, 719], [920, 732], [1090, 737], [1210, 737], [1330, 734], [1405, 731]];
cap(s2, [[118, 77], [180, 70], [297, 158], [555, 135], [570, 133], [730, 163], [880, 181], [1025, 190], [1200, 190], [1382, 179]], [247, 181], c2t);
face({ s: s2, top: [[118, 77], [247, 181]], bottom: [[118, 612], [247, 715]], courses: rows(35, 44.4, 534), joints: narrow, cls: 'j3', fill: 'url(#side)' });
face({ s: s2, top: [[247, 181], [556, 154]], bottom: [[247, 715], [556, 688]], courses: rows(35, 44.4, 534), joints: flat, cls: 'j1', fill: 'url(#front)' });
face({ s: s2, top: c2t, bottom: c2b, courses: rows(35, 44.4, 534), joints: curve, cls: 'j1', fill: 'url(#bend)' });
shape(s2, [[557, 154], [655, 173], [610, 695], [557, 688]], 'cast');
face({ s: s2, top: [[118, 612], [247, 715]], bottom: [[46, 830], [203, 955]], bow: 10, courses: rows(42, 44, 230), joints: narrow, cls: 'j4', fill: 'url(#skirt)' });
face({ s: s2, top: [[247, 715], [556, 688]], bottom: [[203, 955], [543, 924]], bow: 5, courses: rows(26, 44, 238), joints: flat, cls: 'j1', fill: 'url(#front)' });
// The swept base of wall 2 follows its own path, so its courses climb to the right.
const sweep = [[556, 688], [620, 697], [780, 719], [920, 732], [1090, 737], [1405, 731], [1412, 860], [1430, 964], [1195, 976], [1030, 974], [850, 965], [720, 952], [543, 924], [552, 790]];
shape(s2, sweep, 'face', 'url(#bend)');
const climbs = [
  [[553, 733], [640, 733], [760, 720]], [[551, 779], [700, 778], [850, 765], [1050, 738]],
  [[550, 822], [800, 815], [1100, 775], [1320, 736]], [[548, 872], [800, 862], [1150, 815], [1410, 765]],
  [[545, 915], [750, 910], [1100, 870], [1415, 815]], [[720, 952], [1000, 932], [1418, 866]], [[850, 965], [1100, 955], [1422, 912]]
];
climbs.forEach(c => add(poly(c.map(s2)), 'j1'));
let risers = '';
for (let i = 1; i < climbs.length; i++) {
  const a = climbs[i - 1], b = climbs[i];
  const yAt = (l, x) => at(l, (x - l[0][0]) / (l[l.length - 1][0] - l[0][0]))[1];
  const start = Math.max(a[0][0], b[0][0]), stop = Math.min(a[a.length - 1][0], b[b.length - 1][0]);
  for (let x = start + 12 + (i * 17) % 30, k = i; x < stop - 8; k++) {
    risers += poly([[x - 3, yAt(a, x - 3)], [x + 3, yAt(b, x + 3)]].map(s2));
    x += 34 + (k * 13) % 24;
  }
}
for (const x of [880, 930, 970, 1010]) risers += poly([[x, 738], [x + 2, 757 - (x - 880) / 12]].map(s2));
for (const [x, y] of [[1110, 955], [1180, 948], [1240, 940], [1290, 934], [1335, 928], [1380, 920]]) risers += poly([[x, y], [x + 6, 970]].map(s2));
add(risers, 'j1');
add(poly([[556, 688], [552, 790], [543, 924], [720, 952], [850, 965], [1030, 974], [1195, 976], [1430, 964], [1412, 860], [1405, 731], [1330, 734]].map(s2)), 'edge');
add(poly([[556, 688], [620, 697], [780, 719], [920, 732], [1090, 737], [1330, 734]].map(s2)), 'edge broken');

// Wall 3
const c3t = [[517, 147], [620, 170], [780, 190], [960, 203], [1090, 206], [1250, 201], [1393, 194]];
const c3b = [[517, 637], [650, 662], [800, 682], [950, 693], [1200, 696], [1393, 685]];
cap(s3, [[103, 74], [165, 67], [270, 150], [470, 132], [515, 127], [545, 127], [700, 158], [850, 175], [1015, 187], [1195, 187], [1372, 175]], [227, 172], c3t);
face({ s: s3, top: [[103, 74], [227, 172]], bottom: [[103, 568], [227, 663]], courses: rows(42, 44.8, 491), joints: narrow, cls: 'j3', fill: 'url(#side)' });
face({ s: s3, top: [[227, 172], [517, 147]], bottom: [[227, 663], [517, 637]], courses: rows(44, 44.8, 491), joints: flat, cls: 'j1', fill: 'url(#front)' });
face({ s: s3, top: c3t, bottom: c3b, courses: rows(44, 44.8, 491), joints: curve, cls: 'j1', fill: 'url(#bend)' });
shape(s3, [[518, 147], [617, 168], [585, 650], [518, 638]], 'cast');
face({ s: s3, top: [[103, 568], [227, 663]], bottom: [[33, 828], [185, 944]], bow: 10, courses: rows(44, 44, 270), joints: narrow, cls: 'j4', fill: 'url(#skirt)' });
face({ s: s3, top: [[227, 663], [517, 637]], bottom: [[185, 944], [300, 935], [507, 915]], bow: 5, courses: rows(50, 46, 280), joints: flat, cls: 'j1', fill: 'url(#front)' });
face({ s: s3, top: c3b, bottom: [[507, 915], [640, 936], [840, 963], [1000, 972], [1160, 973], [1418, 959]], courses: rows(46, 46, 280), joints: curve, cls: 'j1', fill: 'url(#bend)', topEdge: false });
add(poly([[518, 700], [513, 780], [506, 912]].map(s3)), 'soft');
add(poly(c3b.map(s3)), 'edge broken');
// Short joint stubs left where the sweep meets the wall
let stubs = '';
for (let x = 530; x < 1390; x += 17 + (x * 7) % 23) {
  const y = at(c3b, (x - 517) / 876)[1];
  stubs += poly([[x, y], [x, y + 12 + x % 9]].map(s3));
}
add(stubs, 'stub');
```
FILE: styles.css
```css
* { box-sizing: border-box; }
body { margin: 0; background: #fff; color: #000; font: 12px/15px Roboto, "Open Sans", sans-serif; }
button { margin: 0; padding: 0; border: 0; background: none; font: inherit; color: inherit; }
input, select { margin: 0; font: inherit; color: inherit; }
h1, h2, p { margin: 0; font: inherit; }
ul { margin: 0; padding: 0; list-style: none; }
svg { display: block; flex: none; }
.defs { position: absolute; width: 0; height: 0; }

.app { position: relative; display: flex; flex-direction: column; height: calc(100vh - 30px); margin-right: 330px; background: #f0f0f0; overflow: hidden; }

.caret { flex: none; width: 0; height: 0; border: 3px solid transparent; border-top: 3px solid #333; border-bottom: 0; }
.caret.big { border-width: 4px; border-bottom: 0; }
.caret.up { border-top: 0; border-bottom: 3px solid #333; }
.caret.left { border: 4px solid transparent; border-left: 0; border-right-color: #333; }
.caret.right { border: 4px solid transparent; border-right: 0; border-left-color: #333; }

/* Title bar */
.titlebar { position: relative; flex: none; display: flex; justify-content: flex-end; height: 24px; overflow: hidden; border-bottom: 1px solid #5b5f63;
  background: linear-gradient(#0001, #0000 40%, #fff4), linear-gradient(90deg, #b4b9be, #c4c8cc 10%, #cdd0d3 22%, #a4aab0 24%, #b4b8bd 28%, #c6cacd 32%, #c3c6ca 43%, #a0a6ac 50%, #b4b9be 55%, #8f959c 60%, #a4a9af 62%, #b9bdc2 64%, #a9aeb4 68%, #c3c7cb 96%, #d0d3d6); }
.ghost { position: absolute; top: 5px; height: 30px; filter: blur(4px); background: #dfe1e3; }
.ghost-a { left: 50px; top: 12px; width: 130px; height: 7px; background: #999ea4; }
.ghost-tab { left: 226px; width: 206px; }
.ghost-b { left: 258px; top: 12px; width: 130px; height: 7px; background: #b0b3b7; }
.ghost-dot { left: 236px; top: 9px; width: 12px; height: 12px; background: #e3b8a2; filter: blur(3px); }
.title { position: absolute; left: 539px; top: 5px; display: flex; gap: 16px; }
.infocenter { flex: none; display: flex; align-items: center; width: 481px; padding-left: 6px; background: linear-gradient(#dadada, #bababa); }
.search { width: 179px; height: 22px; margin: 0 4px; padding: 0 3px; border: 1px solid #000; background: #fff; }
.ib { width: 24px; }
.ib svg, .sign svg { width: 17px; height: 17px; margin: 0 auto; }
.sign { display: flex; align-items: center; width: 119px; padding-left: 3px; }
.sign svg { margin: 0 3px 0 0; }
.sign .caret { margin-left: auto; }
.help { width: 34px; margin-left: 5px; border-left: 1px solid #999; }
.winctl { flex: none; display: flex; width: 103px; height: 18px; margin: 0 3px 0 17px; border: 1px solid #4b4f55; border-top: 0; border-radius: 0 0 5px 5px; overflow: hidden; box-shadow: 0 0 2px #fff; }
.winctl button { display: flex; align-items: center; justify-content: center; width: 28px; border-right: 1px solid #55585e; background: linear-gradient(#d6d8db, #9ba0a6 50%, #b4b8bd); }
.winctl svg { width: 14px; height: 12px; }
.winctl .x { flex: 1; border: 0; background: linear-gradient(#e49a87, #b93420 50%, #d4614a); }
.appmenu { position: absolute; left: 0; top: 0; z-index: 2; display: flex; align-items: center; gap: 3px; width: 41px; height: 41px; padding-left: 4px; border: 1px solid #000; background: linear-gradient(#d2d2d2, #8d8d8d 50%, #7a7a7a); }
.appmenu svg { width: 23px; height: 31px; margin-top: -6px; }

/* Ribbon */
.tabs { flex: none; display: grid; grid-template-columns: 81px 71px 62px 48px 72px 57px 103px 77px 49px 60px 63px 58px 64px; height: 20px; padding-left: 47px; padding-top: 3px; background: #9e9e9e; color: #1c1c1c; }
.tabs button { padding-bottom: 1px; }
.tabs .on { background: linear-gradient(#f3f3f3, #fff); border: 1px solid #ccc; border-bottom: 0; }
.mini svg { width: 24px; height: 10px; margin-left: 21px; }
.ribbon { flex: none; display: flex; height: 90px; border-bottom: 2px solid #6e6e6e; background: #fff; color: #3a3a3a; }
.panel { position: relative; flex: none; display: grid; margin-bottom: 1px; border-right: 2px solid #c9c9c9; }
.p-modify { width: 51px; padding: 3px 2px 0 4px; grid-template-rows: 72px 12px; border-right-width: 1px; }
.p-build { grid-template-columns: 47px 38px 52px 84px 66px 47px 44px 48px 48px 42px 50px; }
.p-circ { grid-template-columns: 62px 36px 47px; }
.p-model { grid-template-columns: 46px 36px 54px; }
.p-room { grid-template-rows: 75px 12px; }
.p-room .row { display: grid; grid-template-columns: 43px 52px 58px 40px 60px 45px; }
.p-open { grid-template-columns: 41px 35px 42px 44px 46px; }
.p-datum { grid-template-columns: 43px 39px; }
.p-plane { grid-template-columns: 41px 38px 39px 42px; border-right: 0; }
.fill { flex: 1; margin-bottom: 1px; background: linear-gradient(#e2e2e2, #a0a0a0); border-top: 1px solid #fff; }
.rb { position: relative; display: flex; flex-direction: column; align-items: center; justify-content: flex-start; padding-top: 5px; white-space: nowrap; text-align: center; }
.rb svg { width: 32px; height: 32px; margin-bottom: 5px; }
.rb:disabled { color: #b5b5b5; }
.rb .caret { margin-top: 2px; }
.rb.two .caret { position: absolute; right: 2px; top: 55px; margin: 0; }
.sel { padding-top: 1px; border: 1px solid #2a74bd; background: linear-gradient(#c3dff5, #a9cdec); }
.more { display: flex; align-items: center; justify-content: center; border: 1px solid #d0d0d0; background: #eee; }

.qat { flex: none; display: flex; align-items: center; height: 23px; padding-left: 5px; background: linear-gradient(#ececec, #b9b9b9); border-bottom: 1px solid #6b6b6b; }
.qat button { flex: none; display: flex; align-items: center; justify-content: center; width: 24px; height: 22px; }
.qat button svg { width: 18px; height: 18px; }
.qat > .caret { margin: 0 3px; }
.qat .sep { width: 1px; height: 22px; margin: 0 3px; background: #999; }
.qat .gap { width: 7px; }
.qat .on { border: 1px solid #2a74bd; background: #b3d6f3; }
.qat .viewpick { width: 209px; justify-content: space-between; padding: 0 3px; background: linear-gradient(#fff, #eee); color: #333; }
.qat .cust { width: 18px; flex-direction: column; gap: 2px; }
.cust i { width: 8px; height: 1px; background: #333; }
.options { flex: none; height: 26px; background: #e0e1e3; }

/* Docked palettes */
.work { flex: 1; min-height: 0; display: flex; }
.dock { flex: none; display: flex; flex-direction: column; width: 259px; margin-right: 5px; color: #111; }
.dtitle { flex: none; display: flex; align-items: center; justify-content: space-between; height: 18px; padding: 0 5px 0 4px; background: #bfcddb; color: #48525e; }
.dtitle svg { width: 10px; height: 10px; }
.dtitle.second { margin-top: 4px; }
.props { flex: none; display: flex; flex-direction: column; height: 456px; margin: 2px 1px 0; border: 1px solid #777; border-top-width: 2px; border-color: #777 #ddd #ddd #777; }
.typesel { display: flex; align-items: center; gap: 3px; width: 238px; height: 72px; padding: 0 1px 0 2px; border: 1px solid #ccc; background: linear-gradient(#f6f6f6, #eee); color: #444; }
.thumb { display: flex; align-items: center; justify-content: center; width: 66px; height: 66px; border: 1px solid #ccc; }
.thumb svg { width: 32px; height: 32px; }
.typesel .caret { margin-left: auto; }
.inst { display: flex; gap: 5px; height: 25px; padding-top: 1px; }
.combo { display: flex; align-items: center; justify-content: space-between; width: 155px; height: 22px; padding: 0 4px; border: 1px solid #707070; border-radius: 3px; background: linear-gradient(#f2f2f2, #d6d6d6); }
.edittype { display: flex; align-items: center; gap: 4px; height: 19px; }
.edittype svg { width: 18px; height: 18px; }
.gridwrap { display: flex; height: 330px; overflow: hidden; }
.pg { flex: none; width: 221px; height: 342px; border-collapse: separate; border-spacing: 0; table-layout: fixed; background: #fff; }
.c1 { width: 111px; }
.pg tr { height: 18px; }
.pg th, .pg td { height: 18px; padding: 0 2px 0 1px; border: 0 dotted #777; border-width: 0 1px 1px 0; font-weight: 400; text-align: left; line-height: 17px; white-space: nowrap; overflow: hidden; }
.pg th { padding: 0 0 0 8px; }
.pg .gh th { padding: 0 6px 0 2px; border: 0; background: #dcdcdc; line-height: 18px; }
.gh svg { float: right; width: 8px; height: 9px; margin-top: 4px; fill: none; stroke: #000; }
.pg .dim th, .pg .dim td { color: #808080; }
.pg td.flush { padding: 0; }
.pg td input, .pg td button { display: block; }
.scale { width: 109px; height: 17px; padding: 0 3px; border: 1px solid #000; }
.ed { width: 107px; height: 16px; margin-left: 1px; border: 1px solid #555; border-width: 1px 2px 2px 1px; border-radius: 2px; background: linear-gradient(#f2f2f2, #d8d8d8); text-align: center; line-height: 13px; }
.pg input[type=checkbox] { appearance: none; width: 13px; height: 13px; margin: 2px 0 0 2px; border: 1px solid #8a8a8a; background: linear-gradient(135deg, #c9ced4, #fff); box-shadow: inset 0 0 0 2px #f4f4f4; }
.pfoot { display: flex; align-items: center; justify-content: space-between; height: 26px; padding: 0 19px 0 2px; }
.pfoot a { color: #0a5bb0; }
.pfoot button { width: 73px; height: 21px; border: 1px solid #adb2b5; border-radius: 3px; background: #f4f4f4; color: #838383; }

.vs { flex: none; display: flex; flex-direction: column; align-items: center; width: 16px; margin-left: 1px; padding: 7px 0; background: #eee; }
.vs > .caret:last-child { margin-top: auto; }
.th { flex: none; display: flex; align-items: center; justify-content: center; width: 14px; border: 1px solid #979797; border-radius: 2px; background: linear-gradient(90deg, #f4f4f4, #cfcfcf); }
.vs .th i { width: 7px; height: 7px; background: repeating-linear-gradient(#555 0 1px, #0000 1px 3px); }
.th-props { height: 158px; margin-top: 8px; }
.th-tree { height: 129px; margin-top: 9px; }
.wide { width: 18px; margin: 0; }
.th-view { width: 15px; height: 15px; margin-top: 449px; }

.browser { flex: 1; min-height: 0; display: flex; flex-direction: column; margin: 2px 1px 3px; border: 1px solid #ddd; border-top: 2px solid #777; border-left-color: #777; background: #fff; }
.bmain { flex: 1; min-height: 0; display: flex; overflow: hidden; }
.tree { position: relative; flex: 1; }
.tree::before, .t1::before, .t2::before { content: ""; position: absolute; left: 8px; top: 10px; bottom: 0; border-left: 1px dotted #999; }
.t1, .t2 { position: relative; }
.t1::before { left: 28px; top: 0; bottom: 27px; }
.t1.open::before { bottom: 0; }
.t2::before { left: 48px; top: 0; bottom: 9px; }
.r0, .r1, .t2 li { display: flex; align-items: center; height: 18px; white-space: nowrap; }
.r0 { padding-left: 4px; }
.r0 svg { width: 16px; height: 16px; margin: 0 5px 0 7px; }
.r0 .hl { margin-left: -2px; padding: 1px 3px; background: #e2e2e2; }
.r0.leaf::before { content: ""; width: 10px; margin: 0 -5px 0 4px; border-top: 1px dotted #999; }
.r1 { padding-left: 24px; }
.r1 .tw::after { content: ""; position: absolute; left: 9px; top: 3px; width: 10px; border-top: 1px dotted #999; }
.r1 .tw { margin-right: 13px; }
.t2 li::before { content: ""; width: 14px; margin: 0 3px 0 48px; border-top: 1px dotted #999; }
.tw { position: relative; z-index: 1; flex: none; width: 9px; height: 9px; border: 1px solid #848484; border-radius: 1px; background: linear-gradient(#2b5797, #2b5797) 1px 3px / 5px 1px no-repeat, #fff; }
.tw.plus { background: linear-gradient(#2b5797, #2b5797) 1px 3px / 5px 1px no-repeat, linear-gradient(#2b5797, #2b5797) 3px 1px / 1px 5px no-repeat, #fff; }
.hs { flex: none; display: flex; align-items: center; height: 16px; padding: 0 22px 0 6px; background: #eee; }
.hs .th { flex: 1; height: 13px; margin: 0 10px 0 8px; background: linear-gradient(#f6f6f6, #d0d0d0); }
.hs .th i { width: 7px; height: 7px; background: repeating-linear-gradient(90deg, #555 0 1px, #0000 1px 3px); }

/* Drawing area */
.view { flex: 1; min-width: 0; display: flex; flex-direction: column; border-top: 1px solid #666; border-left: 1px solid #666; }
.vmain { flex: 1; min-height: 0; display: flex; }
.canvas { position: relative; flex: 1; min-width: 0; background: #fff; overflow: hidden; }
.model { width: 100%; height: 100%; }
.model path { shape-rendering: crispEdges; fill: none; }
.model .face { fill: revert-layer; }
.model .shade { fill: #cbcbcb; }
.model .cap { fill: #fff; stroke: #000; }
.model .cast { fill: #000; fill-opacity: .2; }
.model .j1 { stroke: #858585; }
.model .j2 { stroke: #999; }
.model .j3 { stroke: #7c7c7c; }
.model .j4 { stroke: #4a4a4a; }
.model .edge { stroke: #000; }
.model .broken { stroke-dasharray: 9 14 4 7; }
.model .stub { stroke: #555; }
.model .soft { stroke: #ddd; stroke-width: 3; }
.note { font: 38px "Liberation Sans", sans-serif; fill: #000; }
.mdi { position: absolute; right: 4px; top: 8px; display: flex; gap: 4px; }
.mdi svg { width: 14px; height: 14px; }
.cube { position: absolute; right: 17px; top: 86px; width: 150px; height: 92px; }
.cube text { font: bold 11px "Liberation Sans", sans-serif; fill: #8b929a; }
.navbar { position: absolute; right: 1px; top: 199px; display: flex; flex-direction: column; align-items: center; width: 35px; height: 118px; border: 2px solid #8d8d8d; border-radius: 5px; background: #ededed; }
.navbar svg { width: 26px; height: 26px; }
.navbar .nx, .navbar .nm { align-self: flex-end; margin: 2px 3px 8px 0; }
.navbar .nm { margin: auto 3px 2px 0; }
.navbar .nx svg, .navbar .nm svg { width: 9px; height: 9px; }
.navbar .zm svg { width: 18px; height: 18px; }
.navbar .caret { margin-top: 5px; }
.navbar .zm + .caret { margin-top: 8px; }
.navbar hr { width: 26px; margin: 4px 0 6px; border: 0; border-top: 1px solid #999; }
.vcb { flex: none; display: flex; align-items: center; height: 17px; margin-bottom: 3px; padding-left: 11px; background: #f0f0f0; }
.vcb button { flex: none; width: 21px; }
.vcb button svg { width: 17px; height: 17px; margin: 0 auto; }
.vcb .sc { width: 66px; text-align: left; white-space: nowrap; color: #222; }
.hs2 { flex: 1; display: flex; align-items: center; margin-left: 5px; height: 16px; background: #ebebeb; }
.hs2 .th { width: 15px; height: 15px; margin-left: 616px; background: linear-gradient(#f4f4f4, #c4c4c4); }
.hs2 .right { margin-left: auto; }
.grip { width: 12px; height: 12px; margin: 4px 4px 0 10px; }

/* Status bar */
.status { flex: none; display: flex; align-items: center; height: 23px; padding-left: 2px; border-top: 1px solid #777; background: linear-gradient(#e9e9e9, #c4c4c4); }
.status p { width: 974px; }
.sb { display: flex; align-items: center; justify-content: center; width: 24px; height: 21px; margin-right: 2px; background: #d6d6d6; }
.sb svg, .filter svg { width: 17px; height: 17px; }
.status select { height: 21px; appearance: none; border: 2px solid #cfcfcf; border-radius: 0; padding: 0 2px; color: #808080; opacity: 1; background: linear-gradient(45deg, #0000 50%, #999 50%) right 9px top 7px / 4px 4px no-repeat, linear-gradient(-45deg, #0000 50%, #999 50%) right 5px top 7px / 4px 4px no-repeat, #fff; }
.status .sel1 { width: 209px; margin-right: 3px; }
.status .sel2 { width: 157px; padding-left: 4px; }
.count { width: 51px; justify-content: flex-start; gap: 6px; padding-left: 4px; }
.toggles { display: flex; margin-left: auto; padding-right: 63px; }
.filter { display: flex; align-items: center; gap: 1px; width: 31px; }
.filter svg { margin-left: 1px; }

/* Task bar */
.taskbar { flex: none; display: flex; align-items: center; gap: 4px; height: 40px; padding-left: 8px; border-top: 2px solid #8b8b8b; background: linear-gradient(#333, #0000 20%), linear-gradient(115deg, #0a0a0a 0 30%, #1b1b1b 32% 34%, #0b0b0b 36% 67%, #1b1b1b 68% 72%, #0b0b0b 74%); color: #fff; }
.start { width: 38px; margin-right: 10px; }
.start svg { width: 38px; height: 38px; }
.tb { display: flex; align-items: center; justify-content: center; width: 58px; height: 37px; border: 1px solid #777; border-radius: 3px; background: linear-gradient(160deg, #6a6a6a, #2a2a2a 50%, #1a1a1a); }
.tb svg { width: 36px; height: 32px; }
.tb.plain { border-color: transparent; background: none; }
.tb.plain svg { width: 32px; height: 28px; }
.tb.active { border-color: #ddd; background: linear-gradient(160deg, #c4c4c4, #777 60%, #999); }
.tray { display: flex; gap: 6px; margin: 0 5px 0 auto; }
.tray svg { width: 18px; height: 18px; }
.taskbar time { width: 64px; text-align: center; line-height: 17px; }
.peek { align-self: stretch; width: 14px; border: 1px solid #777; background: linear-gradient(#444, #111); }
```
